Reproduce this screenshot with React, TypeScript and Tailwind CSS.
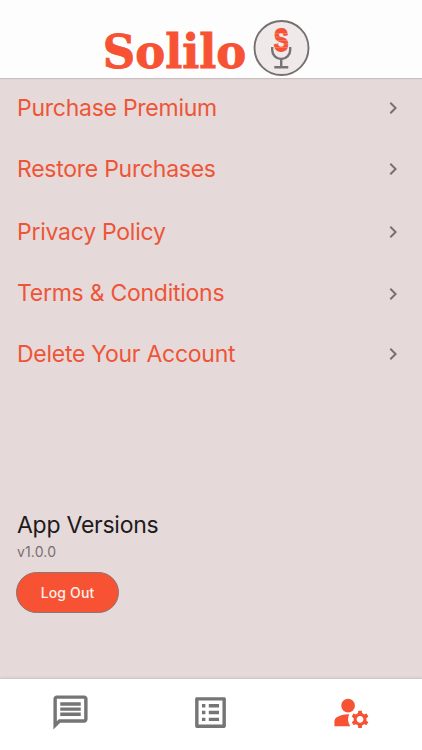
import { MdChevronRight, MdManageAccounts, MdOutlineListAlt, MdOutlineMessage } from 'react-icons/md'

const links = [
	{ label: 'Purchase Premium', height: 'h-[60px]' },
	{ label: 'Restore Purchases', height: 'h-[62px]' },
	{ label: 'Privacy Policy', height: 'h-[64px]' },
	{ label: 'Terms & Conditions', height: 'h-[59px]' },
	{ label: 'Delete Your Account', height: 'h-[62px]' },
]

function Logo() {
	return (
		<svg width="210" height="60" viewBox="102 18 210 60" className="block">
			<text
				x="102.8"
				y="68.2"
				textLength="143.5"
				lengthAdjust="spacingAndGlyphs"
				fontSize="47"
				fontWeight="700"
				fill="#f65233"
				stroke="#f65233"
				strokeWidth="0.9"
				fontFamily="'DejaVu Serif', serif"
			>
				Solilo
			</text>
			<circle cx="281.5" cy="48" r="27" fill="#f0e9ea" stroke="#777071" strokeWidth="1.9" />
			<text
				x="274"
				y="51.3"
				textLength="14.4"
				lengthAdjust="spacingAndGlyphs"
				fontSize="31.5"
				fontWeight="700"
				fill="#f65233"
				stroke="#f65233"
				strokeWidth="1.8"
				fontFamily="'Liberation Sans', sans-serif"
			>
				S
			</text>
			<path d="M273 33.5h16M273 37h16M273 40.5h16M273 44h16M273 47.5h16" stroke="#f0e9ea" strokeWidth=".5" opacity=".5" />
			<path d="M272.2 47v3a9 9 0 0 0 18 0v-3M281.2 59v8M274.3 67.2h14" fill="none" stroke="#777273" strokeWidth="2.4" />
		</svg>
	)
}

export default function App() {
	return (
		<div className="flex h-[750px] w-full flex-col bg-[#e5d9d9] font-['Inter',sans-serif]">
			<header className="z-10 flex h-[78px] shrink-0 justify-center bg-[#fdfdfd] pt-[18px] pr-[8px] shadow-[0_1px_1px_#c9bfc0]">
				<Logo />
			</header>

			<main className="flex flex-1 flex-col">
				<nav>
					{links.map((link) => (
						<a key={link.label} className={`flex items-center justify-between px-[17px] text-[#ee5537] ${link.height}`}>
							<span className="text-[23px] tracking-[-0.26px]">{link.label}</span>
							<MdChevronRight size={24} color="#777071" />
						</a>
					))}
				</nav>

				<section className="mt-[123px] px-[16px]">
					<h2 className="pl-px text-[23px] leading-[34px] tracking-[-0.26px] text-[#1e1a1b]">App Versions</h2>
					<p className="pl-px text-[14px] leading-[20px] tracking-[0.15px] text-[#777071]">v1.0.0</p>
					<button className="mt-[10px] h-[41px] w-[103px] rounded-full border border-[#8a7674] bg-[#f65233] text-[14px] font-medium tracking-[0.15px] text-[#fdf0ee]">
						Log Out
					</button>
				</section>
			</main>

			<footer className="grid h-[71px] shrink-0 grid-cols-3 items-center justify-items-center bg-white pb-[4px] shadow-[0_-1px_2px_#c9bfc0]">
				<MdOutlineMessage size={41} color="#757575" />
				<MdOutlineListAlt size={41} color="#757575" />
				<MdManageAccounts size={41} color="#f65233" />
			</footer>
		</div>
	)
}
